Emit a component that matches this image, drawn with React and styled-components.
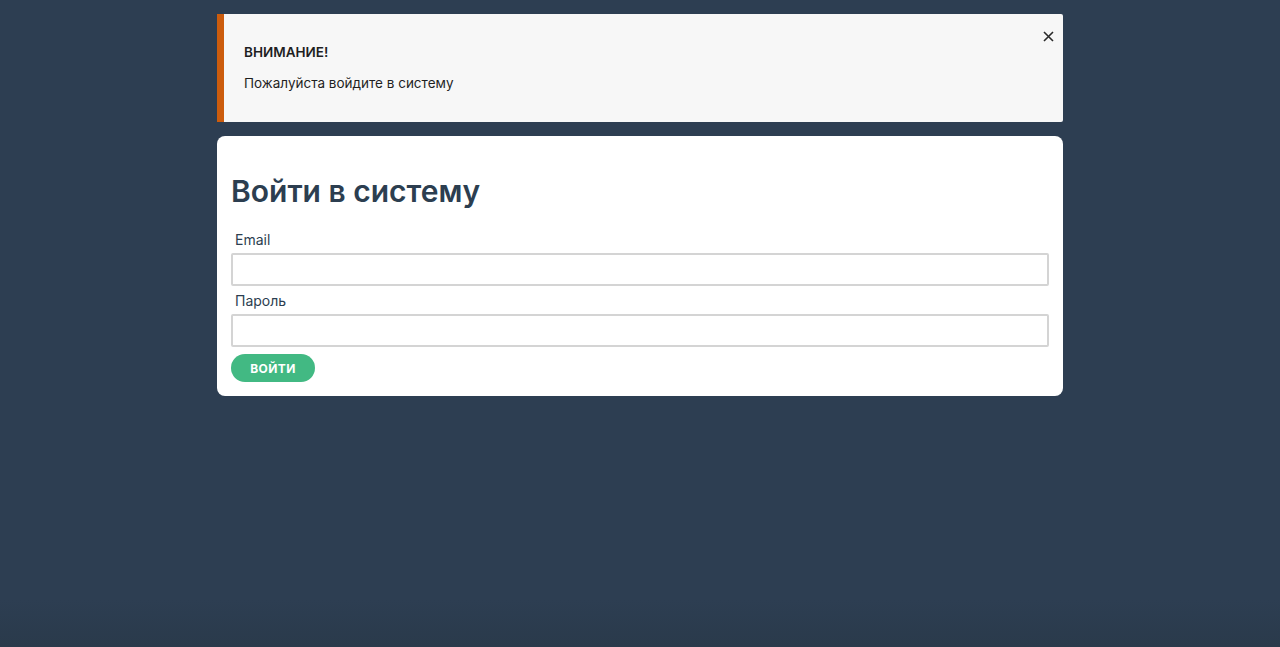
import { createGlobalStyle, styled } from 'styled-components';

const GlobalStyle = createGlobalStyle`
  html, body {
    margin: 0;
    padding: 0;
    background: #2c3e50;
    height: 100%;
  }
  body {
    font-family: Inter, "Noto Sans", sans-serif;
    color: #2c3e50;
  }
`;

const Page = styled.div`
  min-height: 647px;
  box-sizing: border-box;
  padding-top: 14px;
  background: linear-gradient(to bottom, #2d3e52 0, #2d3e52 600px, #2a3a4b 647px);
`;

const Container = styled.div`
  width: 846px;
  margin: 0 auto;
  display: flex;
  flex-direction: column;
  gap: 14px;
`;

const Alert = styled.div`
  position: relative;
  background: #f7f7f7;
  border-left: 7px solid #cc5c0d;
  border-radius: 0 2px 2px 0;
  padding: 29px 20px 25px;
  height: 108px;
  box-sizing: border-box;
  color: #1f1f1f;
`;

const AlertTitle = styled.div`
  font-size: 13.5px;
  font-weight: 600;
  line-height: 18px;
  margin-bottom: 13px;
`;

const AlertText = styled.div`
  font-size: 13.5px;
  line-height: 18px;
`;

const Close = styled.button`
  position: absolute;
  top: 15px;
  right: 8px;
  width: 14px;
  height: 14px;
  padding: 0;
  border: 0;
  background: none;
  cursor: pointer;
  display: flex;
  align-items: center;
  justify-content: center;
  color: #2a2a2a;
`;

const Card = styled.div`
  background: #fff;
  border-radius: 8px;
  padding: 14px;
`;

const Title = styled.h1`
  margin: 24px 0 23px;
  font-size: 30px;
  font-weight: 600;
  line-height: 34px;
  color: #2c3e50;
`;

const Label = styled.label`
  display: block;
  padding-left: 4px;
  font-size: 14px;
  line-height: 18px;
  color: #2c3e50;
  margin-bottom: 4px;
  margin-top: ${(p) => (p.$first ? '0' : '6px')};
`;

const Input = styled.input`
  display: block;
  width: 100%;
  height: 33px;
  box-sizing: border-box;
  border: 2px solid #d4d4d4;
  border-radius: 2px;
  font-family: inherit;
  font-size: 14px;
  padding: 0 8px;
  outline: none;
`;

const Button = styled.button`
  margin-top: 7px;
  width: 84px;
  height: 28px;
  border: 0;
  border-radius: 14px;
  background: #42b983;
  color: #fff;
  font-family: inherit;
  font-size: 12px;
  font-weight: 700;
  letter-spacing: 0.4px;
  cursor: pointer;
`;

export default function App() {
  return (
    <Page>
      <GlobalStyle />
      <Container>
        <Alert>
          <AlertTitle>ВНИМАНИЕ!</AlertTitle>
          <AlertText>Пожалуйста войдите в систему</AlertText>
          <Close aria-label="close">
            <svg width="11" height="11" viewBox="0 0 11 11">
              <path d="M1 1 L10 10 M10 1 L1 10" stroke="currentColor" strokeWidth="1.6" />
            </svg>
          </Close>
        </Alert>
        <Card>
          <Title>Войти в систему</Title>
          <form onSubmit={(e) => e.preventDefault()}>
            <Label $first>Email</Label>
            <Input type="email" />
            <Label>Пароль</Label>
            <Input type="password" />
            <Button type="submit">ВОЙТИ</Button>
          </form>
        </Card>
      </Container>
    </Page>
  );
}
